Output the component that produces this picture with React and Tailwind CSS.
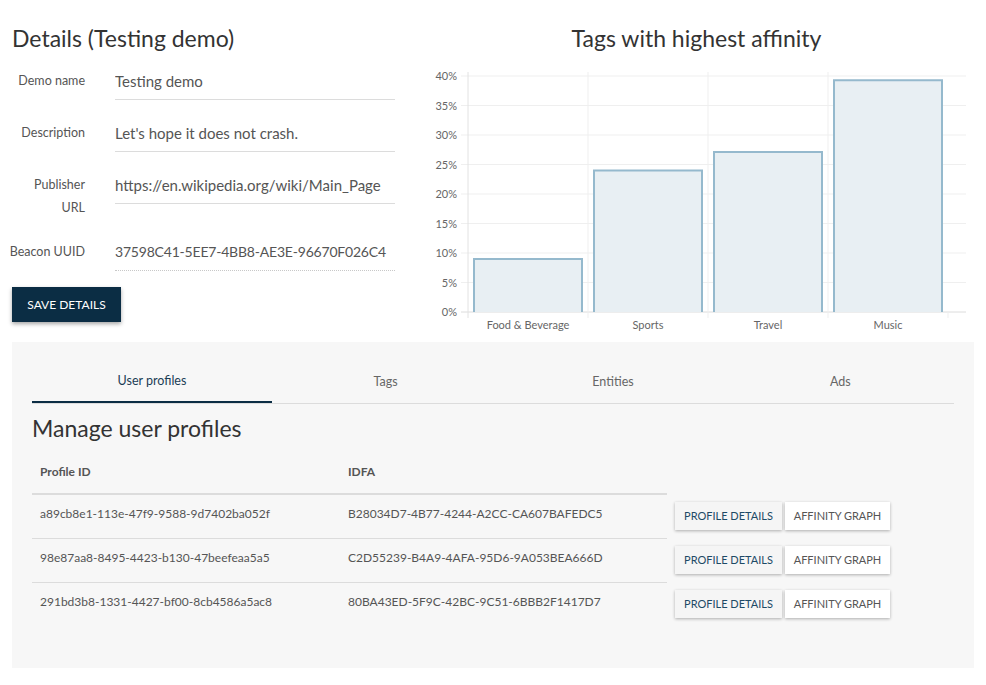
import React from "react";

const fields = [
  { label: "Demo name", value: "Testing demo" },
  { label: "Description", value: "Let's hope it does not crash." },
  { label: "Publisher URL", value: "https://en.wikipedia.org/wiki/Main_Page" },
  { label: "Beacon UUID", value: "37598C41-5EE7-4BB8-AE3E-96670F026C4", dotted: true },
];

const tags = [
  { name: "Food & Beverage", pct: 9 },
  { name: "Sports", pct: 24 },
  { name: "Travel", pct: 27.1 },
  { name: "Music", pct: 39.3 },
];

const profiles = [
  ["a89cb8e1-113e-47f9-9588-9d7402ba052f", "B28034D7-4B77-4244-A2CC-CA607BAFEDC5"],
  ["98e87aa8-8495-4423-b130-47beefeaa5a5", "C2D55239-B4A9-4AFA-95D6-9A053BEA666D"],
  ["291bd3b8-1331-4427-bf00-8cb4586a5ac8", "80BA43ED-5F9C-42BC-9C51-6BBB2F1417D7"],
];

const tabs = ["User profiles", "Tags", "Entities", "Ads"];

function Chart() {
  const top = 76;
  const bottom = 312;
  const y = (p) => bottom - ((bottom - top) * p) / 40;
  const ticks = [40, 35, 30, 25, 20, 15, 10, 5, 0];
  const cols = [469, 589, 709, 829];
  return (
    <svg width="555" height="280" viewBox="420 60 555 280" className="block">
      {ticks.map((t) => (
        <g key={t}>
          <line x1="462" x2="967" y1={y(t)} y2={y(t)} stroke={t === 0 ? "#dcdcdc" : "#efefef"} strokeWidth="1" />
          <text x="458" y={y(t) + 4} textAnchor="end" fontSize="11" fill="#666" fontFamily="Lato, sans-serif">
            {t}%
          </text>
        </g>
      ))}
      {cols.map((c, i) => (
        <line key={c} x1={c} x2={c} y1={top - 4} y2={bottom + 6} stroke={i === 0 ? "#e2e2e2" : "#efefef"} strokeWidth="1" />
      ))}
      <line x1="949" x2="949" y1={bottom} y2={bottom + 6} stroke="#efefef" />
      {tags.map((t, i) => {
        const x0 = cols[i] + 6;
        const x1 = x0 + 108;
        const yt = y(t.pct);
        return (
          <g key={t.name}>
            <rect x={x0} y={yt} width={x1 - x0} height={bottom - yt} fill="#e8eff3" />
            <path d={`M${x0} ${bottom} V${yt} H${x1} V${bottom}`} fill="none" stroke="#95b9cd" strokeWidth="2" />
            <text x={cols[i] + 60} y="329" textAnchor="middle" fontSize="11" fill="#666" fontFamily="Lato, sans-serif">
              {t.name}
            </text>
          </g>
        );
      })}
    </svg>
  );
}

export default function App() {
  return (
    <div className="w-[986px] h-[685px] bg-white font-['Lato',sans-serif] text-[#555]">
      <div className="flex px-3 pt-[22px]">
        <div className="w-[384px]">
          <h2 className="text-[23px] leading-[32px] text-[#333] mb-2">Details (Testing demo)</h2>
          {fields.map((f) => (
            <div key={f.label} className="flex items-start mb-[14px]">
              <div className="w-[73px] shrink-0 pt-[7px] flex justify-end text-right whitespace-nowrap text-[12.5px] leading-[23px]">
                {f.label === "Publisher URL" ? (
                  <span>
                    Publisher
                    <br />
                    URL
                  </span>
                ) : (
                  <span>{f.label}</span>
                )}
              </div>
              <div
                className={
                  "ml-[30px] flex-1 h-[38px] pt-[8px] leading-[22px] whitespace-nowrap overflow-hidden border-b " +
                  (f.dotted
                    ? "text-[14px] tracking-[-0.2px] border-dotted border-[#c8c8c8]"
                    : "text-[15px] border-[#dcdcdc]")
                }
              >
                {f.value}
              </div>
            </div>
          ))}
          <button className="mt-[2px] w-[109px] h-[35px] bg-[#0b2d44] text-white text-[12px] uppercase shadow-[0_2px_4px_rgba(0,0,0,0.35)]">
            Save details
          </button>
        </div>
        <div className="flex-1 ml-6 flex flex-col items-center">
          <h2 className="text-[23px] leading-[32px] text-[#333]">Tags with highest affinity</h2>
          <div className="mt-[6px] self-start">
            <Chart />
          </div>
        </div>
      </div>

      <div className="mx-3 mt-[2px] h-[326px] bg-[#f7f7f7] px-5 pt-5">
        <div className="flex border-b border-[#dcdcdc]">
          {tabs.map((t, i) => (
            <div
              key={t}
              className={
                "h-[41px] flex items-center justify-center text-[12.5px] " +
                (i === 0
                  ? "w-[240px] text-[#1b3d55] border-b-2 border-[#0b2d44] -mb-px"
                  : "flex-1 text-[#666]")
              }
            >
              {t}
            </div>
          ))}
        </div>
        <h3 className="mt-[10px] text-[23px] leading-[28px] text-[#333]">Manage user profiles</h3>
        <div className="mt-[10px]">
          <div className="flex w-[635px] h-[43px] border-b-2 border-[#dcdcdc] text-[12px] font-bold text-[#555]">
            <div className="w-[308px] px-2 pt-[11px]">Profile ID</div>
            <div className="flex-1 px-2 pt-[11px]">IDFA</div>
          </div>
          {profiles.map((p, i) => (
            <div key={p[0]} className="flex">
              <div
                className={
                  "flex w-[635px] h-[44px] text-[12px] leading-[18px] " +
                  (i < profiles.length - 1 ? "border-b border-[#dcdcdc]" : "")
                }
              >
                <div className="w-[308px] px-2 pt-[10px]">{p[0]}</div>
                <div className="flex-1 px-2 pt-[10px]">{p[1]}</div>
              </div>
              <div className="ml-2 pt-[7px] flex gap-[3px]">
                <button className="w-[107px] h-[28px] bg-[#f5f5f5] text-[#1d4a66] text-[11px] uppercase shadow-[0_1px_3px_rgba(0,0,0,0.3)]">
                  Profile details
                </button>
                <button className="w-[105px] h-[28px] bg-white text-[#555] text-[11px] uppercase shadow-[0_1px_3px_rgba(0,0,0,0.3)]">
                  Affinity graph
                </button>
              </div>
            </div>
          ))}
        </div>
      </div>
    </div>
  );
}
